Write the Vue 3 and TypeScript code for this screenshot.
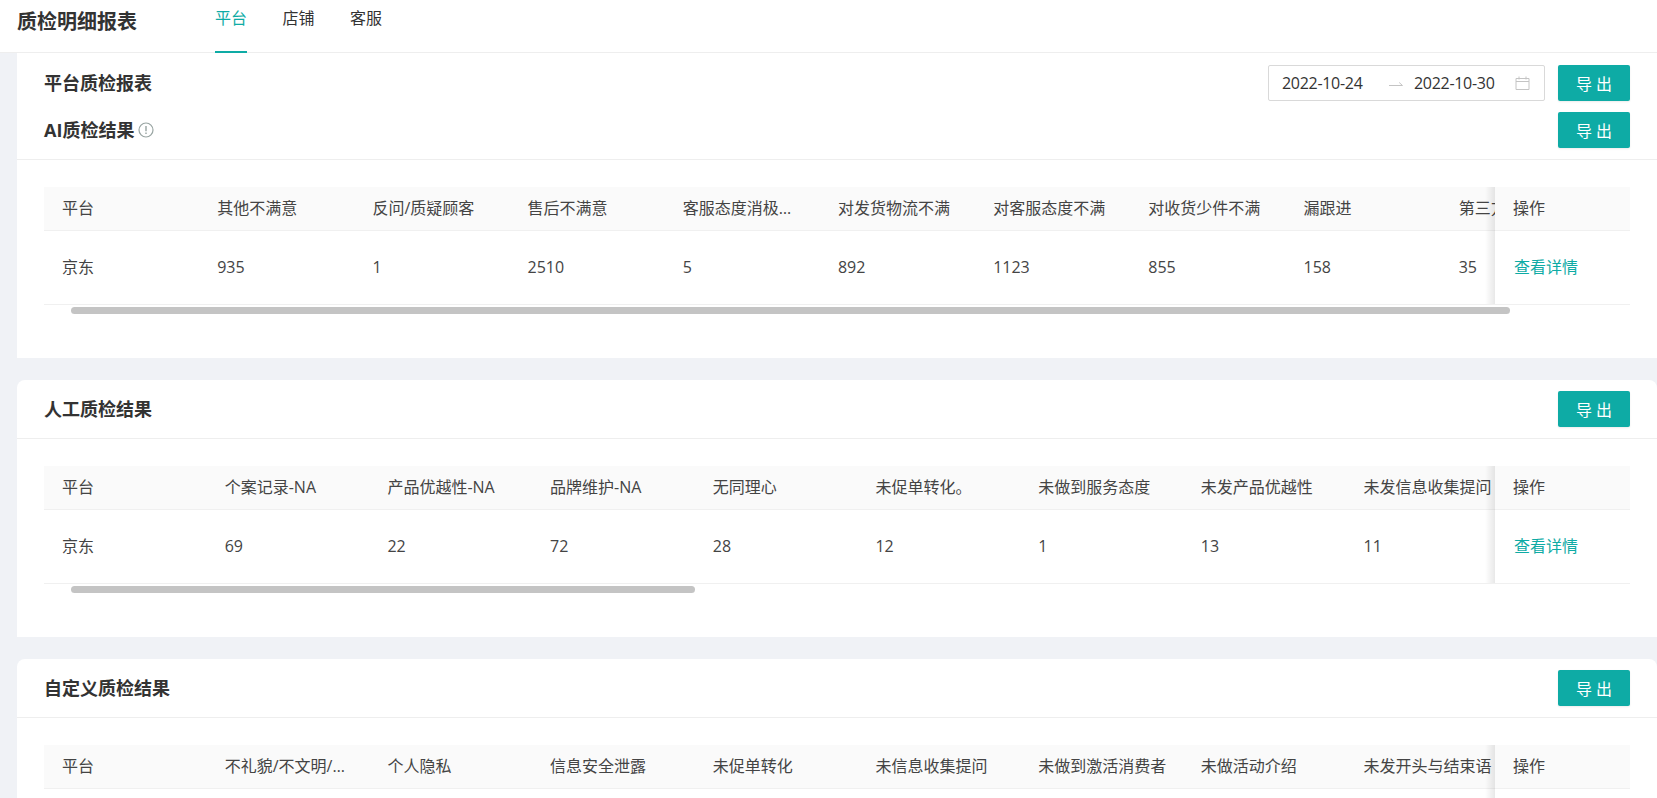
<script setup lang="ts">
type Section = {
  title: string
  columnWidth: number
  columns: string[]
  values: (string | number)[]
  thumbWidth: number
  info?: boolean
}

const tabs = ['平台', '店铺', '客服']

const sections: Section[] = [
  {
    title: 'AI质检结果',
    info: true,
    columnWidth: 155.2,
    thumbWidth: 1439,
    columns: ['平台', '其他不满意', '反问/质疑顾客', '售后不满意', '客服态度消极怠工', '对发货物流不满', '对客服态度不满', '对收货少件不满', '漏跟进', '第三方物流问题'],
    values: ['京东', 935, 1, 2510, 5, 892, 1123, 855, 158, 35],
  },
  {
    title: '人工质检结果',
    columnWidth: 162.7,
    thumbWidth: 624,
    columns: ['平台', '个案记录-NA', '产品优越性-NA', '品牌维护-NA', '无同理心', '未促单转化。', '未做到服务态度', '未发产品优越性', '未发信息收集提问'],
    values: ['京东', 69, 22, 72, 28, 12, 1, 13, 11],
  },
  {
    title: '自定义质检结果',
    columnWidth: 162.7,
    thumbWidth: 624,
    columns: ['平台', '不礼貌/不文明/用语规范', '个人隐私', '信息安全泄露', '未促单转化', '未信息收集提问', '未做到激活消费者', '未做活动介绍', '未发开头与结束语'],
    values: ['京东', 12, 3, 5, 20, 8, 16, 9, 14],
  },
]
</script>

<template>
  <div class="page">
    <header class="topbar">
      <h1 class="page-title">质检明细报表</h1>
      <nav class="tabs">
        <a v-for="(tab, i) in tabs" :key="tab" class="tab" :class="{ active: i === 0 }">{{ tab }}</a>
      </nav>
    </header>

    <main class="content">
      <section v-for="(section, index) in sections" :key="section.title" class="card" :class="{ first: index === 0 }">
        <div class="card-head">
          <div v-if="index === 0" class="head-row">
            <h2 class="card-title">平台质检报表</h2>
            <div class="tools">
              <div class="range">
                <span class="date">2022-10-24</span>
                <svg class="arrow" viewBox="0 0 14 8" width="14" height="8">
                  <path d="M0 6.5H13.5L10.2 3.5" fill="none" stroke="#c4c4c4" stroke-width="1" />
                </svg>
                <span class="date">2022-10-30</span>
                <svg class="calendar" viewBox="0 0 15 14" width="15" height="14">
                  <path d="M1 2.5H14V13.5H1ZM1 5.5H14M4 .5V3.5M11 .5V3.5" fill="none" stroke="#c4c4c4" stroke-width="1" />
                </svg>
              </div>
              <button class="export">导出</button>
            </div>
          </div>
          <div class="head-row">
            <h2 class="card-title">
              {{ section.title }}
              <svg v-if="section.info" class="info" viewBox="0 0 16 16" width="16" height="16">
                <circle cx="8" cy="8" r="7" fill="none" stroke="#98a4a2" stroke-width="1.2" />
                <path d="M8 4V9.2M8 10.6V12" fill="none" stroke="#98a4a2" stroke-width="1.4" />
              </svg>
            </h2>
            <button class="export">导出</button>
          </div>
        </div>

        <div class="card-body">
          <div class="table">
            <div class="table-scroll">
              <div class="table-row head">
                <div
                  v-for="col in section.columns"
                  :key="col"
                  class="cell"
                  :style="{ width: section.columnWidth + 'px' }"
                >{{ col }}</div>
              </div>
              <div class="table-row data">
                <div
                  v-for="(val, i) in section.values"
                  :key="i"
                  class="cell"
                  :style="{ width: section.columnWidth + 'px' }"
                >{{ val }}</div>
              </div>
            </div>
            <div class="table-fixed">
              <div class="table-row head">
                <div class="cell">操作</div>
              </div>
              <div class="table-row data">
                <div class="cell"><a class="link">查看详情</a></div>
              </div>
            </div>
          </div>
          <div class="scrollbar">
            <div class="thumb" :style="{ width: section.thumbWidth + 'px' }"></div>
          </div>
        </div>
      </section>
    </main>
  </div>
</template>

<style>
html,
body {
  margin: 0;
  overflow: hidden;
}
</style>

<style scoped>
.page {
  height: 100vh;
  display: flex;
  flex-direction: column;
  background: #f0f2f6;
  font-family: "Open Sans", "Noto Sans CJK SC", sans-serif;
  color: #333;
  overflow: hidden;
}

.topbar {
  flex: none;
  height: 52px;
  display: flex;
  align-items: flex-start;
  background: #fff;
  border-bottom: 1px solid #eeeeee;
  padding-left: 17px;
}

.page-title {
  margin: 0;
  width: 198px;
  font-size: 20px;
  line-height: 44px;
  font-weight: 700;
  color: #333;
}

.tabs {
  display: flex;
  gap: 35.5px;
}

.tab {
  height: 51px;
  line-height: 36px;
  font-size: 16px;
  color: #333;
  border-bottom: 2px solid transparent;
}

.tab.active {
  color: #0eaba5;
  border-bottom-color: #0eaba5;
}

.content {
  flex: 1;
  min-height: 0;
  padding-left: 17px;
  display: flex;
  flex-direction: column;
  gap: 22px;
}

.card {
  flex: none;
  background: #fff;
  border-radius: 8px 8px 0 0;
  padding-bottom: 43px;
}

.card.first {
  border-radius: 0;
}

.card-head {
  display: flex;
  flex-direction: column;
  gap: 11px;
  padding: 11px 27px;
  border-bottom: 1px solid #eeeeee;
}

.card.first .card-head {
  padding-top: 12px;
}

.head-row {
  display: flex;
  align-items: center;
  justify-content: space-between;
  height: 36px;
}

.card-title {
  margin: 0;
  display: flex;
  align-items: center;
  gap: 4px;
  font-size: 18px;
  line-height: 34px;
  font-weight: 700;
  color: #333;
}

.info {
  flex: none;
}

.tools {
  display: flex;
  gap: 13px;
}

.range {
  box-sizing: border-box;
  width: 277px;
  height: 36px;
  display: flex;
  align-items: center;
  border: 1px solid #d9d9d9;
  border-radius: 2px;
  padding-left: 13px;
  font-size: 16px;
  color: #333;
}

.date {
  width: 80px;
  white-space: nowrap;
  letter-spacing: -0.3px;
}

.arrow {
  margin: 0 11px 0 27px;
}

.calendar {
  margin-left: 21px;
}

.export {
  width: 72px;
  height: 36px;
  padding: 0;
  border: 0;
  border-radius: 2px;
  background: #0eaba5;
  color: #fff;
  font-family: inherit;
  font-size: 16px;
  letter-spacing: 0.25em;
  text-indent: 0.25em;
  box-shadow: 0 1px 2px rgba(0, 0, 0, 0.08);
}

.card-body {
  padding: 27px 27px 0;
}

.table {
  display: flex;
}

.table-scroll {
  flex: 1;
  min-width: 0;
  overflow: hidden;
}

.table-fixed {
  flex: none;
  width: 135px;
  position: relative;
}

.table-fixed::before {
  content: "";
  position: absolute;
  top: 0;
  bottom: 1px;
  left: -10px;
  width: 10px;
  background: linear-gradient(to right, rgba(0, 0, 0, 0), rgba(0, 0, 0, 0.09));
}

.table-row {
  display: flex;
  box-sizing: border-box;
  border-bottom: 1px solid #f0f0f0;
  width: max-content;
  min-width: 100%;
}

.table-row.head {
  height: 44px;
  background: #fafafa;
}

.table-row.data {
  height: 74px;
  background: #fff;
}

.cell {
  flex: none;
  box-sizing: border-box;
  padding: 0 16px 0 18px;
  font-size: 16px;
  line-height: 43px;
  color: #444;
  overflow: hidden;
  white-space: nowrap;
  text-overflow: ellipsis;
}

.data .cell {
  line-height: 73px;
}

.link {
  margin-left: 1px;
  color: #0eaba5;
}

.scrollbar {
  height: 10px;
  padding: 2px 0 1px 27px;
  box-sizing: border-box;
}

.thumb {
  height: 7px;
  border-radius: 4px;
  background: #c4c4c4;
}
</style>
